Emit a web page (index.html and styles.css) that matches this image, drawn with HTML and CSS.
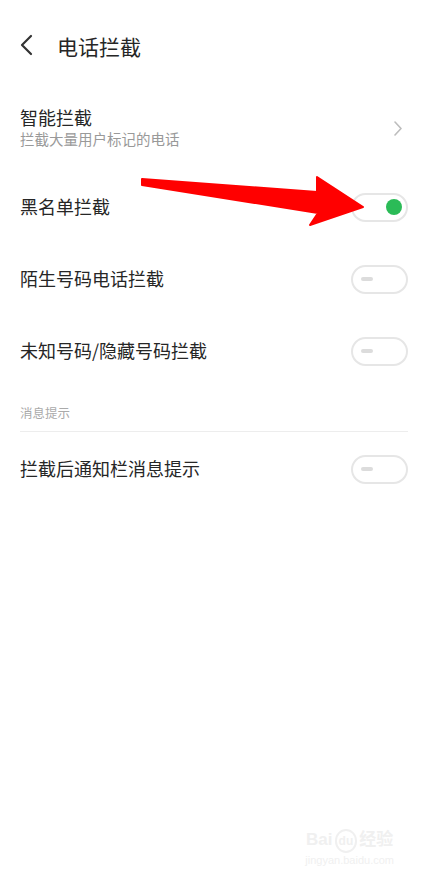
FILE: index.html
```html
<!DOCTYPE html>
<html lang="zh-CN">

<head>
    <meta charset="UTF-8">
    <meta name="viewport" content="width=device-width, initial-scale=1.0">
    <title>电话拦截</title>
    <link rel="stylesheet" href="styles.css">
</head>

<body>
    <div class="page">
        <header class="top-bar">
            <svg class="back" width="14" height="22" viewBox="0 0 14 22">
                <path d="M12 2 L3 11 L12 20" fill="none" stroke="#333" stroke-width="2.2" stroke-linecap="round" stroke-linejoin="round" />
            </svg>
            <h1>电话拦截</h1>
        </header>

        <ul class="settings">
            <li class="row row-link">
                <div class="row-text">
                    <div class="row-title">智能拦截</div>
                    <div class="row-sub">拦截大量用户标记的电话</div>
                </div>
                <svg class="chevron" width="8" height="15" viewBox="0 0 8 15">
                    <path d="M1 1 L7 7.5 L1 14" fill="none" stroke="#bdbdbd" stroke-width="1.6" stroke-linecap="round" stroke-linejoin="round" />
                </svg>
            </li>
            <li class="row">
                <div class="row-title">黑名单拦截</div>
                <span class="switch on"><span class="knob"></span></span>
            </li>
            <li class="row">
                <div class="row-title">陌生号码电话拦截</div>
                <span class="switch"><span class="knob"></span></span>
            </li>
            <li class="row">
                <div class="row-title">未知号码/隐藏号码拦截</div>
                <span class="switch"><span class="knob"></span></span>
            </li>
        </ul>

        <div class="section-label">消息提示</div>

        <ul class="settings">
            <li class="row">
                <div class="row-title">拦截后通知栏消息提示</div>
                <span class="switch"><span class="knob"></span></span>
            </li>
        </ul>

        <!-- red annotation arrow drawn over the list -->
        <svg class="arrow" width="230" height="56" viewBox="0 0 230 56">
            <polygon points="4,5 179,18 179,3 225,33 172,51 180,39 4,11" fill="#ff0000" stroke="#ff0000" stroke-width="2" stroke-linejoin="round" />
        </svg>

        <div class="watermark">
            <div class="wm-logo">Bai<span class="wm-paw">du</span>经验</div>
            <div class="wm-url">jingyan.baidu.com</div>
        </div>
    </div>
</body>

</html>
```

FILE: styles.css
```css
body {
    margin: 0;
    background-color: #ffffff;
    font-family: "Noto Sans CJK SC", "Noto Sans", sans-serif;
    color: #222;
}

.page {
    position: relative;
    width: 422px;
    height: 881px;
    overflow: hidden;
}

.top-bar {
    display: flex;
    align-items: center;
    height: 92px;
    padding: 0 0 0 19px;
    box-sizing: border-box;
}

.back {
    margin-top: -2px;
}

.top-bar h1 {
    margin: 0 0 0 24px;
    font-size: 21px;
    font-weight: 400;
    line-height: 28px;
    color: #262626;
}

.settings {
    list-style: none;
    margin: 0;
    padding: 0 14px 0 20px;
}

.row {
    display: flex;
    align-items: center;
    justify-content: space-between;
    height: 72px;
}

.row-link {
    height: auto;
    padding: 13px 0 21px;
}

.row-title {
    font-size: 18px;
    line-height: 24px;
    color: #262626;
}

.row-sub {
    font-size: 14.5px;
    line-height: 20px;
    color: #999;
}

.chevron {
    margin-right: 6px;
    margin-top: 2px;
}

.switch {
    display: flex;
    align-items: center;
    width: 57px;
    height: 29px;
    box-sizing: border-box;
    border: 2px solid #e6e6e6;
    border-radius: 15px;
    padding: 0 8px;
    margin-top: 2px;
}

.switch .knob {
    width: 12px;
    height: 4px;
    border-radius: 2px;
    background-color: #dcdcdc;
}

.switch.on {
    justify-content: flex-end;
    padding: 0 4px;
}

.switch.on .knob {
    width: 16px;
    height: 16px;
    border-radius: 50%;
    background-color: #2bbb57;
}

.section-label {
    margin: 0 14px 0 20px;
    padding: 18px 0 9px;
    font-size: 12.5px;
    line-height: 18px;
    color: #aaa;
    border-bottom: 1px solid #ededed;
}

.arrow {
    position: absolute;
    left: 138px;
    top: 174px;
}

.watermark {
    position: absolute;
    right: 28px;
    bottom: 14px;
    color: #f0f0f0;
    font-family: "Liberation Sans", "Noto Sans CJK SC", sans-serif;
    text-align: center;
}

.wm-logo {
    font-size: 17px;
    font-weight: bold;
    line-height: 20px;
}

.wm-paw {
    display: inline-block;
    margin: 0 2px;
    font-size: 12px;
    border: 2px solid #f0f0f0;
    border-radius: 50%;
    padding: 0 2px;
}

.wm-url {
    font-size: 11px;
    line-height: 14px;
}
```
